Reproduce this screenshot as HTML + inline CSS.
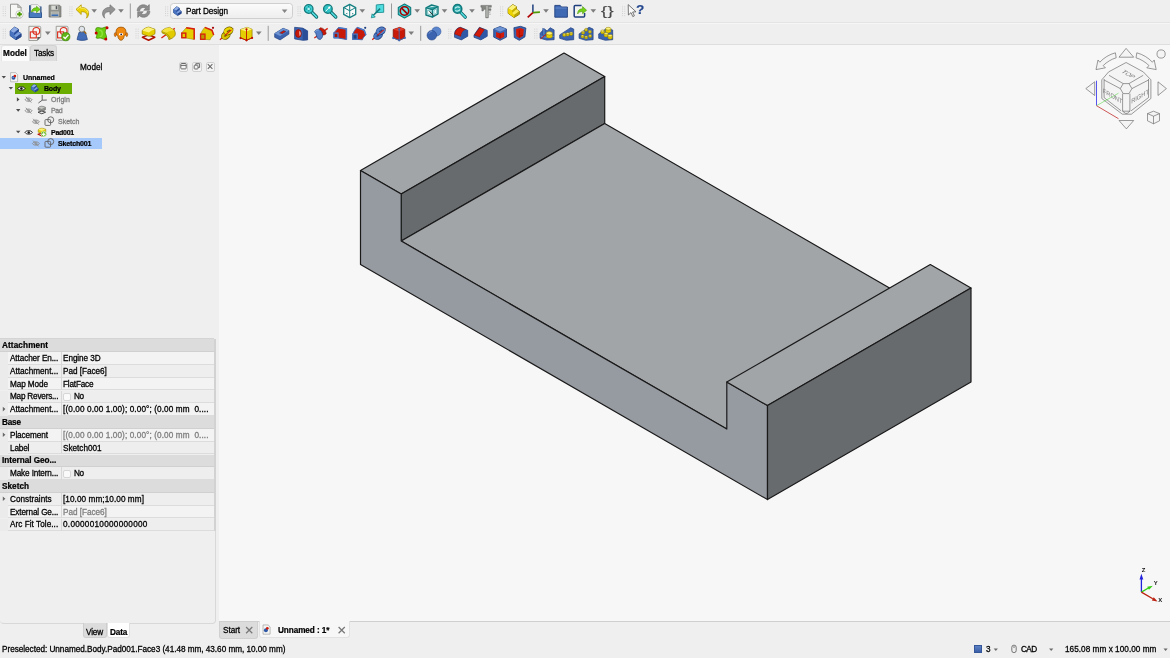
<!DOCTYPE html>
<html><head><meta charset="utf-8"><title>FreeCAD</title>
<style>
*{box-sizing:border-box;margin:0;padding:0}
html,body{width:1170px;height:658px;overflow:hidden;background:#efefef;font-family:"Liberation Sans",sans-serif;font-size:9px;color:#000}
.abs{position:absolute}
#app{position:relative;width:1170px;height:658px;background:#efefef;overflow:hidden}
.t{position:absolute;white-space:nowrap;line-height:11px;height:11px;will-change:transform;-webkit-text-stroke:.28px currentColor}
.t.b{-webkit-text-stroke:.22px currentColor}
.b{font-weight:bold}
.g{color:#8a8a8a}
#view{position:absolute;left:219px;top:45px;width:951px;height:576px;background:#f7f7f7}
.hline{position:absolute;height:1px;background:#d8d8d8}
svg{position:absolute;overflow:visible}
</style></head><body><div id="app">
<!-- TOOLBARS -->
<div class="hline" style="left:0;top:22px;width:1170px;background:#e4e4e4"></div><div class="hline" style="left:0;top:23px;width:1170px;background:#f6f6f6"></div>
<div class="hline" style="left:0;top:44px;width:1170px;background:#dedede"></div>
<!--TB1-->
<div class="abs" style="left:170px;top:3px;width:122.5px;height:15.6px;background:linear-gradient(#fbfbfb,#eeeeee);border:1px solid #cfcfcf;border-radius:3.5px"></div><svg style="left:0;top:0" width="700" height="45" viewBox="0 0 700 45">
<rect x="2.7" y="6.4" width="1" height="1" fill="#d2d2d2"/><rect x="4.9" y="6.4" width="1" height="1" fill="#d2d2d2"/><rect x="2.7" y="8.6" width="1" height="1" fill="#d2d2d2"/><rect x="4.9" y="8.6" width="1" height="1" fill="#d2d2d2"/><rect x="2.7" y="10.8" width="1" height="1" fill="#d2d2d2"/><rect x="4.9" y="10.8" width="1" height="1" fill="#d2d2d2"/><rect x="2.7" y="13.0" width="1" height="1" fill="#d2d2d2"/><rect x="4.9" y="13.0" width="1" height="1" fill="#d2d2d2"/><rect x="2.7" y="15.2" width="1" height="1" fill="#d2d2d2"/><rect x="4.9" y="15.2" width="1" height="1" fill="#d2d2d2"/>
<g transform="translate(7.9 3.0) scale(1.000)"><path d="M2.600 1.200h7.200l3.400 3.400v10.200H2.600z" fill="#f7f7f5" stroke="#8b8d88" stroke-width=".9"/><path d="M9.800 1.200v3.400h3.400z" fill="#c6c8c3" stroke="#8b8d88" stroke-width=".6"/>
<circle cx="11.600" cy="11.200" r="3.700" fill="#fdfdfd" stroke="#b5b7b2" stroke-width=".7"/><path d="M11.600 8.800v4.800M9.200 11.200h4.800" stroke="#4e9a06" stroke-width="1.900"/></g>
<g transform="translate(27.3 3.0) scale(1.000)"><path d="M1.8 2.2h5l1 1.3h6.4v11H1.8z" fill="#204a87"/><path d="M3.6 1.6h6.8l2.4 2.4v6H3.6z" fill="#f4f4f2" stroke="#999" stroke-width=".5"/>
<path d="M2.2 9.6c2-1.2 4-.2 5.6.4 2 .7 4 .6 6-.4v4.6H2.2z" fill="#4a7bc0"/><path d="M1.8 9.4v5.1h12.4V9.4" fill="none" stroke="#204a87" stroke-width=".8"/>
<path d="M4.2 9.2c.2-3 2.2-4.6 5-4.4V3.2l3.6 3.2-3.6 3.2V7.8c-1.8-.3-3.2.1-5 1.4z" fill="#73d216" stroke="#4e9a06" stroke-width=".6"/></g>
<g transform="translate(46.9 3.0) scale(1.000)"><path d="M2.2 2.2h10.4l1.4 1.4v10.4H2.2z" fill="#8f918c" stroke="#6d6f6a" stroke-width=".8"/><rect x="4.4" y="2.6" width="6.8" height="4.2" fill="#d7d9d4"/><rect x="8.8" y="3.1" width="1.6" height="3.1" fill="#55575a"/>
<rect x="4" y="8.6" width="8" height="5" fill="#c3c5c0"/><rect x="4.6" y="11.4" width="6.8" height="1.7" fill="#3c6eb4"/><path d="M4.6 9.6h6.8M4.6 10.5h6.8" stroke="#9a9c97" stroke-width=".5"/></g>
<rect x="69.3" y="6.4" width="1" height="1" fill="#d2d2d2"/><rect x="71.5" y="6.4" width="1" height="1" fill="#d2d2d2"/><rect x="69.3" y="8.6" width="1" height="1" fill="#d2d2d2"/><rect x="71.5" y="8.6" width="1" height="1" fill="#d2d2d2"/><rect x="69.3" y="10.8" width="1" height="1" fill="#d2d2d2"/><rect x="71.5" y="10.8" width="1" height="1" fill="#d2d2d2"/><rect x="69.3" y="13.0" width="1" height="1" fill="#d2d2d2"/><rect x="71.5" y="13.0" width="1" height="1" fill="#d2d2d2"/><rect x="69.3" y="15.2" width="1" height="1" fill="#d2d2d2"/><rect x="71.5" y="15.2" width="1" height="1" fill="#d2d2d2"/>
<g transform="translate(74.6 3.0) scale(1.000)"><path d="M1.4 6.4l5.2-4.6v2.7c4.6-.2 7.6 2.6 7.4 6.4-.1 1.9-1.1 3.3-2.2 4.3.7-1.5.9-2.9.3-4.1-1-2-3-2.6-5.5-2.4v2.8z" fill="#edd400" stroke="#b39800" stroke-width=".8" stroke-linejoin="round"/>
<path d="M2.6 6.4l3.4-3v1.7c4-.3 6.8 1.8 7.2 4.6" fill="none" stroke="#fcf08a" stroke-width=".8"/></g>
<path d="M91.4 9.3 h5.6 l-2.8 3.4z" fill="#7d7d7d"/>
<g transform="translate(100.6 3.0) scale(1.000)"><path d="M14.6 6.4L9.4 1.8v2.7C4.8 4.3 1.8 7.1 2 10.9c.1 1.9 1.1 3.3 2.2 4.3-.7-1.5-.9-2.9-.3-4.1 1-2 3-2.6 5.5-2.4v2.8z" fill="#939393" stroke="#7a7a7a" stroke-width=".8" stroke-linejoin="round"/></g>
<path d="M118.2 9.3 h5.6 l-2.8 3.4z" fill="#7d7d7d"/>
<rect x="129.8" y="3.5" width="1" height="15" fill="#9a9a9a"/>
<g transform="translate(135.5 3.0) scale(1.000)"><path d="M1.600 7.800C1.800 4.200 4.400 1.800 7.800 1.800c1.700 0 3 .5 4.100 1.500l1.900-1.700v5.600H8.200l1.900-1.800c-.7-.6-1.500-.9-2.400-.9-1.900 0-3.200 1.300-3.500 3.300z" fill="#8d8d8d" stroke="#6f6f6f" stroke-width=".6"/>
<path d="M14.400 8.200c-.2 3.600-2.800 6-6.200 6-1.700 0-3-.5-4.100-1.500L2.200 14.400V8.800h5.600L5.900 10.600c.7.600 1.500.9 2.400.9 1.900 0 3.200-1.300 3.500-3.300z" fill="#8d8d8d" stroke="#6f6f6f" stroke-width=".6"/></g>
<rect x="165.0" y="6.4" width="1" height="1" fill="#d2d2d2"/><rect x="167.2" y="6.4" width="1" height="1" fill="#d2d2d2"/><rect x="165.0" y="8.6" width="1" height="1" fill="#d2d2d2"/><rect x="167.2" y="8.6" width="1" height="1" fill="#d2d2d2"/><rect x="165.0" y="10.8" width="1" height="1" fill="#d2d2d2"/><rect x="167.2" y="10.8" width="1" height="1" fill="#d2d2d2"/><rect x="165.0" y="13.0" width="1" height="1" fill="#d2d2d2"/><rect x="167.2" y="13.0" width="1" height="1" fill="#d2d2d2"/><rect x="165.0" y="15.2" width="1" height="1" fill="#d2d2d2"/><rect x="167.2" y="15.2" width="1" height="1" fill="#d2d2d2"/>
<g transform="translate(170.3 4.4) scale(0.860)"><g transform="translate(1.5 1.2) scale(.82)"><path d="M2.800 5.500L7.200 1.700L11 3.800V6.400L13.700 8.200V11.300L8.600 14.400L2.800 10.300z" fill="#3b63b0" stroke="#1f3f7e" stroke-width=".9" stroke-linejoin="round"/>
<path d="M2.800 5.500L7.200 1.700L11 3.800L6.600 7.500z" fill="#8fade3"/><path d="M6.600 7.500L11 3.800V6.400L6.600 10.100z" fill="#2c4f9c"/><path d="M6.600 10.100L11 6.400L13.700 8.200L8.600 11.900z" fill="#7d9fdc"/><path d="M8.600 11.900L13.700 8.200V11.300L8.600 14.400z" fill="#27478f"/><path d="M2.800 5.500L6.600 7.500V10.100L8.600 11.900V14.400L2.800 10.300z" fill="#4a74c0"/></g></g>
<path d="M281.8 9.6 h5.6 l-2.8 3.4z" fill="#858585"/>
<rect x="297.5" y="6.4" width="1" height="1" fill="#d2d2d2"/><rect x="299.7" y="6.4" width="1" height="1" fill="#d2d2d2"/><rect x="297.5" y="8.6" width="1" height="1" fill="#d2d2d2"/><rect x="299.7" y="8.6" width="1" height="1" fill="#d2d2d2"/><rect x="297.5" y="10.8" width="1" height="1" fill="#d2d2d2"/><rect x="299.7" y="10.8" width="1" height="1" fill="#d2d2d2"/><rect x="297.5" y="13.0" width="1" height="1" fill="#d2d2d2"/><rect x="299.7" y="13.0" width="1" height="1" fill="#d2d2d2"/><rect x="297.5" y="15.2" width="1" height="1" fill="#d2d2d2"/><rect x="299.7" y="15.2" width="1" height="1" fill="#d2d2d2"/>
<g transform="translate(302.8 3.0) scale(1.000)"><path d="M8.800 9l5 5" stroke="#0d6466" stroke-width="3.300" stroke-linecap="round"/><path d="M8.800 9l5 5" stroke="#55dfe1" stroke-width="1.700" stroke-linecap="round"/>
<circle cx="5.9" cy="6" r="4.3" fill="#3ccfd1" stroke="#11797b" stroke-width="1.3"/><path d="M5.9 2.9v6.2M2.8 6h6.2" stroke="#0f8385" stroke-width="1" stroke-dasharray="1.6 2.2"/><circle cx="5.9" cy="6" r="1.2" fill="#b5f2f3"/></g>
<g transform="translate(322.0 3.0) scale(1.000)"><path d="M8.800 9l5 5" stroke="#0d6466" stroke-width="3.300" stroke-linecap="round"/><path d="M8.800 9l5 5" stroke="#55dfe1" stroke-width="1.700" stroke-linecap="round"/>
<circle cx="5.9" cy="6" r="4.3" fill="#2fc3c5" stroke="#11797b" stroke-width="1.3"/><path d="M3.6 8.4l4-4.2" stroke="#e6f7f7" stroke-width="1"/><path d="M8.6 3.2L5.8 4l2 2z" fill="#fff"/></g>
<g transform="translate(341.7 3.0) scale(1.000)"><path d="M8 1.4l6 3.2v6.8l-6 3.2-6-3.2V4.6z" fill="#fbfbfb" stroke="#157f81" stroke-width="1.3" stroke-linejoin="round"/><path d="M2 4.6l6 3.2 6-3.2M8 7.8v6.8M8 1.4v6.4" stroke="#157f81" stroke-width="1" fill="none"/>
<path d="M4 10.4l1.6-.6v1.4zM10.4 10l1.6.6-1.6.8z" fill="#157f81"/></g>
<path d="M359.5 9.3 h5.6 l-2.8 3.4z" fill="#7d7d7d"/>
<g transform="translate(369.5 3.0) scale(1.000)"><path d="M6.8 1.9l7.4-.6v8l-7.6.3z" fill="#4fdcde" stroke="#1b8f91" stroke-width=".9" stroke-linejoin="round"/><path d="M10.6 5.6L3.4 12.8" stroke="#11797b" stroke-width="1.5"/><path d="M1.8 14.8l.8-4 3.2 3.2z" fill="#4fdcde" stroke="#11797b" stroke-width=".7"/></g>
<rect x="391.0" y="3.5" width="1" height="15" fill="#9a9a9a"/>
<g transform="translate(396.5 3.0) scale(1.000)"><path d="M8 1l6.2 3.5v7L8 15l-6.200-3.500v-7z" fill="#3bd3d5" stroke="#11797b" stroke-width="1.1" stroke-linejoin="round"/><circle cx="8" cy="8" r="4.2" fill="#6ee9eb" stroke="#a40000" stroke-width="1.6"/><path d="M5.1 5.1l5.8 5.8" stroke="#a40000" stroke-width="1.7"/></g>
<path d="M414.4 9.3 h5.6 l-2.8 3.4z" fill="#7d7d7d"/>
<g transform="translate(424.0 3.0) scale(1.000)"><path d="M2 4.800l5.600-2.800 6.400 1.600v7.200l-5.600 3.400-6.400-2.200z" fill="#c9eeee" stroke="#11797b" stroke-width="1.400" stroke-linejoin="round"/><path d="M2 4.800l6.400 2 5.600-3.400z" fill="#2a9c9e"/><path d="M2 4.800l6.400 2 5.600-3.400M8.400 6.800v7.400" fill="none" stroke="#11797b" stroke-width="1.200"/><path d="M3.600 7.200l3.400 1v3.800l-3.400-1.200z" fill="#f4fbfb" stroke="#2a9a9c" stroke-width=".5"/><path d="M10 7.400l2.600-1.600v4.200l-2.600 1.600z" fill="#f4fbfb" stroke="#2a9a9c" stroke-width=".5"/><path d="M5.400 8.400l4.400 4.200" stroke="#333" stroke-width="1"/></g>
<path d="M441.7 9.3 h5.6 l-2.8 3.4z" fill="#7d7d7d"/>
<g transform="translate(451.3 3.0) scale(1.000)"><path d="M9 9l5 5.200" stroke="#0d6466" stroke-width="3.200" stroke-linecap="round"/><path d="M9 9l5 5.200" stroke="#55dfe1" stroke-width="1.600" stroke-linecap="round"/>
<circle cx="6.200" cy="5.900" r="4.300" fill="#2aa9ab" stroke="#11797b" stroke-width="1.500"/><path d="M3.800 5.400c.8-1.600 3.200-2 4.600-.8M8.600 6.600c-.8 1.600-3.200 2-4.600.8" stroke="#c9f3f3" stroke-width="1.100" fill="none"/></g>
<path d="M469.2 9.3 h5.6 l-2.8 3.4z" fill="#7d7d7d"/>
<g transform="translate(478.5 3.0) scale(1.000)"><path d="M2.4 2.400h10.400v1.800H9.800v1.600h2.600v1.500H9.800v7.500H7.200V6.200H5.600l-1 1.800H3.400V4.200h-1z" fill="#858783" stroke="#5f615d" stroke-width=".5"/><path d="M10.400 8h2M10.400 9.600h1.400M10.400 11.200h2" stroke="#8b8d89" stroke-width=".6"/><rect x="7.800" y="3" width="1.400" height="11" fill="#bcbeba"/></g>
<rect x="500.0" y="6.4" width="1" height="1" fill="#d2d2d2"/><rect x="502.2" y="6.4" width="1" height="1" fill="#d2d2d2"/><rect x="500.0" y="8.6" width="1" height="1" fill="#d2d2d2"/><rect x="502.2" y="8.6" width="1" height="1" fill="#d2d2d2"/><rect x="500.0" y="10.8" width="1" height="1" fill="#d2d2d2"/><rect x="502.2" y="10.8" width="1" height="1" fill="#d2d2d2"/><rect x="500.0" y="13.0" width="1" height="1" fill="#d2d2d2"/><rect x="502.2" y="13.0" width="1" height="1" fill="#d2d2d2"/><rect x="500.0" y="15.2" width="1" height="1" fill="#d2d2d2"/><rect x="502.2" y="15.2" width="1" height="1" fill="#d2d2d2"/>
<g transform="translate(505.5 3.0) scale(1.000)"><g transform="translate(-.2 -.2) scale(1.02)"><path d="M2.800 5.500L7.200 1.700L11 3.800V6.400L13.700 8.200V11.300L8.600 14.400L2.800 10.300z" fill="#e2cb00" stroke="#7a6800" stroke-width=".9" stroke-linejoin="round"/>
<path d="M2.800 5.500L7.200 1.700L11 3.800L6.600 7.500z" fill="#fcf27a"/><path d="M6.600 7.500L11 3.800V6.400L6.600 10.100z" fill="#c4ae00"/><path d="M6.600 10.100L11 6.400L13.700 8.200L8.600 11.900z" fill="#f7ea55"/><path d="M8.600 11.900L13.700 8.200V11.300L8.600 14.400z" fill="#b8a200"/><path d="M2.800 5.500L6.600 7.500V10.100L8.600 11.900V14.400L2.800 10.300z" fill="#edd400"/></g></g>
<g transform="translate(525.5 3.0) scale(1.000)"><path d="M7.400 1.600v8" stroke="#1f3f7e" stroke-width="1.500"/><path d="M7.400 9.600l7-.4" stroke="#4e9a06" stroke-width="1.700"/><path d="M7.400 9.600l-5.200 4.800" stroke="#b00000" stroke-width="1.700"/></g>
<path d="M543.2 9.3 h5.6 l-2.8 3.4z" fill="#7d7d7d"/>
<g transform="translate(553.0 3.0) scale(1.000)"><path d="M1.800 2.400h5.400l1.200 1.600h6v10.200H1.800z" fill="#3f69b3" stroke="#1f3f7e" stroke-width=".9" stroke-linejoin="round"/><path d="M2.400 5h11.400" stroke="#6e93d2" stroke-width=".8"/></g>
<g transform="translate(572.0 3.0) scale(1.000)"><path d="M9.600 2.400H3.200c-.6 0-1 .4-1 1v9.600c0 .6.400 1 1 1h8.400c.6 0 1-.4 1-1V10" fill="#f3f3f1" stroke="#1f3f7e" stroke-width="1.500"/><path d="M5.600 11c0-3.400 1.800-5.200 5-5.200V3.600l4 3.600-4 3.600V8.600c-2.200-.2-3.800.6-5 2.400z" fill="#73d216" stroke="#4e9a06" stroke-width=".6"/></g>
<path d="M590.5 9.3 h5.6 l-2.8 3.4z" fill="#7d7d7d"/>
<rect x="622.0" y="6.4" width="1" height="1" fill="#d2d2d2"/><rect x="624.2" y="6.4" width="1" height="1" fill="#d2d2d2"/><rect x="622.0" y="8.6" width="1" height="1" fill="#d2d2d2"/><rect x="624.2" y="8.6" width="1" height="1" fill="#d2d2d2"/><rect x="622.0" y="10.8" width="1" height="1" fill="#d2d2d2"/><rect x="624.2" y="10.8" width="1" height="1" fill="#d2d2d2"/><rect x="622.0" y="13.0" width="1" height="1" fill="#d2d2d2"/><rect x="624.2" y="13.0" width="1" height="1" fill="#d2d2d2"/><rect x="622.0" y="15.2" width="1" height="1" fill="#d2d2d2"/><rect x="624.2" y="15.2" width="1" height="1" fill="#d2d2d2"/>
<g transform="translate(626.0 3.0) scale(1.000)"><path d="M2.200 1.600l.2 10.400 2.600-2.400 1.800 4 1.600-.8-1.800-3.800 3.400-.2z" fill="#fafafa" stroke="#555" stroke-width=".8" stroke-linejoin="round"/></g>
<rect x="2.7" y="28.7" width="1" height="1" fill="#d2d2d2"/><rect x="4.9" y="28.7" width="1" height="1" fill="#d2d2d2"/><rect x="2.7" y="30.9" width="1" height="1" fill="#d2d2d2"/><rect x="4.9" y="30.9" width="1" height="1" fill="#d2d2d2"/><rect x="2.7" y="33.1" width="1" height="1" fill="#d2d2d2"/><rect x="4.9" y="33.1" width="1" height="1" fill="#d2d2d2"/><rect x="2.7" y="35.3" width="1" height="1" fill="#d2d2d2"/><rect x="4.9" y="35.3" width="1" height="1" fill="#d2d2d2"/><rect x="2.7" y="37.5" width="1" height="1" fill="#d2d2d2"/><rect x="4.9" y="37.5" width="1" height="1" fill="#d2d2d2"/>
<g transform="translate(7.4 25.4) scale(1.000)"><path d="M2.800 5.500L7.200 1.700L11 3.800V6.400L13.700 8.200V11.300L8.600 14.400L2.800 10.300z" fill="#3b63b0" stroke="#1f3f7e" stroke-width=".9" stroke-linejoin="round"/>
<path d="M2.800 5.500L7.200 1.700L11 3.800L6.600 7.500z" fill="#8fade3"/><path d="M6.600 7.500L11 3.800V6.400L6.600 10.100z" fill="#2c4f9c"/><path d="M6.600 10.100L11 6.400L13.700 8.200L8.600 11.900z" fill="#7d9fdc"/><path d="M8.600 11.900L13.700 8.200V11.300L8.600 14.400z" fill="#27478f"/><path d="M2.800 5.500L6.600 7.500V10.100L8.600 11.900V14.400L2.800 10.300z" fill="#4a74c0"/></g>
<g transform="translate(27.3 25.3) scale(1.000)"><path d="M1.600 1h10.600c.8 0 1.200.4 1.200 1.200v9.600L10 15.200H1.600z" fill="#f2f2f0" stroke="#8b8d88" stroke-width=".8"/><path d="M13.400 11.800L10 15.200v-3.400z" fill="#5a5c58"/><rect x="3" y="6.600" width="6" height="6" fill="none" stroke="#dc2a1a" stroke-width="1.100"/><circle cx="9" cy="5.600" r="3.400" fill="none" stroke="#dc2a1a" stroke-width="1.100"/></g>
<path d="M45.0 31.6 h5.6 l-2.8 3.4z" fill="#7d7d7d"/>
<g transform="translate(54.6 25.3) scale(1.000)"><path d="M1.600 1h10.600c.8 0 1.200.4 1.200 1.200v12.800H1.600z" fill="#f2f2f0" stroke="#8b8d88" stroke-width=".8"/><rect x="3" y="6.600" width="6" height="6" fill="none" stroke="#dc2a1a" stroke-width="1.100"/><circle cx="9" cy="5.600" r="3.400" fill="none" stroke="#dc2a1a" stroke-width="1.100"/>
<circle cx="11.200" cy="11.400" r="4.100" fill="#5fb518" stroke="#3f8a05" stroke-width=".7"/><path d="M8.800 11.400l1.800 1.800 3.200-3.600" fill="none" stroke="#fff" stroke-width="1.300"/></g>
<g transform="translate(74.2 24.9) scale(1.000)"><path d="M4.800 7.400h6.400l2 7.200c-3.400 1.200-7 1.200-10.400 0z" fill="#446db7" stroke="#1f3f7e" stroke-width=".7"/><circle cx="7.600" cy="4.200" r="2.900" fill="#dfe3ea" stroke="#8b8d88" stroke-width="1"/><path d="M9.800 6.400l2.200 2.400" stroke="#9a6a1c" stroke-width="1.500"/></g>
<g transform="translate(93.8 25.3) scale(1.000)"><path d="M2.200 3c1.600-1.400 3.400-.6 4.800-.2 2 .6 3.600-1.600 6.400-1-.8 2-2.200 3.200-2 5.200.2 2.200 2 3.600 1.200 6.800-2.600 1-3.800-.8-5.600-1-1.800-.2-3 .800-4.800-.4.800-1.800 1-3 .6-4.600C2.400 6.200 1.400 5 2.200 3z" fill="#6ccc10" stroke="#3f8a05" stroke-width=".8"/><path d="M6 5c1.500 0 2.500 1.500 2.500 3.500S7.500 11.500 6.500 11" fill="none" stroke="#8ee238" stroke-width="1.400" stroke-linecap="round"/><circle cx="13.200" cy="2.400" r="1.500" fill="#c80000"/><circle cx="2.400" cy="7.800" r="1.500" fill="#c80000"/><circle cx="12" cy="13.800" r="1.500" fill="#c80000"/></g>
<g transform="translate(113.0 25.3) scale(1.000)"><path d="M2 7.200c-1 1.200-1 3.200.2 4.200.8-.6 1.200-1.600 1.400-2.800zM14 7.200c1 1.200 1 3.200-.2 4.200-.8-.6-1.200-1.600-1.400-2.800z" fill="#f57900" stroke="#8f4a00" stroke-width=".6"/><path d="M8 1.800c3.200 0 5 2 5 4.800 0 2-.8 3.200-1.800 4.400-.4 2.200-1.600 4-3.200 4s-2.800-1.800-3.200-4C3.800 9.800 3 8.600 3 6.600c0-2.800 1.800-4.800 5-4.800z" fill="#f08a10" stroke="#8f4a00" stroke-width=".7"/><ellipse cx="8" cy="9" rx="2.200" ry="1.300" fill="#fff"/><circle cx="8.200" cy="9" r=".9" fill="#1a1a3a"/></g>
<rect x="135.5" y="28.7" width="1" height="1" fill="#d2d2d2"/><rect x="137.7" y="28.7" width="1" height="1" fill="#d2d2d2"/><rect x="135.5" y="30.9" width="1" height="1" fill="#d2d2d2"/><rect x="137.7" y="30.9" width="1" height="1" fill="#d2d2d2"/><rect x="135.5" y="33.1" width="1" height="1" fill="#d2d2d2"/><rect x="137.7" y="33.1" width="1" height="1" fill="#d2d2d2"/><rect x="135.5" y="35.3" width="1" height="1" fill="#d2d2d2"/><rect x="137.7" y="35.3" width="1" height="1" fill="#d2d2d2"/><rect x="135.5" y="37.5" width="1" height="1" fill="#d2d2d2"/><rect x="137.7" y="37.5" width="1" height="1" fill="#d2d2d2"/>
<g transform="translate(140.6 25.3) scale(1.000)"><path d="M1.800 12l6.200-2.400 6.200 2.400L8 15z" fill="none" stroke="#b01000" stroke-width="1.500" stroke-linejoin="round"/><path d="M1.600 5.200c2-2 4.400-3.200 6.600-3.400l6.200 2.200v4.400c-2 1.600-4 2.400-6.200 2.600L1.600 8.800z" fill="#e6cf00" stroke="#8f7a00" stroke-width=".7" stroke-linejoin="round"/><path d="M1.800 5.200c2-2 4.200-3 6.400-3.200l6 2.200c-2 .4-4.200 1.400-6 3z" fill="#fcf27a"/></g>
<g transform="translate(159.9 25.3) scale(1.000)"><path d="M1.500 12.700L14.900 3.100" stroke="#d81e0e" stroke-width="1.300"/><path d="M1.900 5.500Q5 2.500 9.700 2.100L14.500 4.900Q16 7.500 15.200 10.300Q12.500 13.500 9 14.400Q8.500 9.500 2.200 7.600z" fill="#e2cb00" stroke="#8f7a00" stroke-width=".7" stroke-linejoin="round"/><path d="M2 5.600Q5 2.700 9.700 2.300L14.300 5Q9 5.300 5.200 8z" fill="#f3e23c"/><path d="M2.600 6.600Q8.600 8 10.400 13.600" fill="none" stroke="#8f7a00" stroke-width=".6"/></g>
<g transform="translate(179.8 25.3) scale(1.000)"><path d="M2 7.400l4.400-5 8 1.200v10.600L5.800 12.600H2z" fill="#e6cf00" stroke="#8f7a00" stroke-width=".5"/><path d="M6.400 2.400l8 1.200v10.600" fill="none" stroke="#d81e0e" stroke-width="1.500"/><rect x="2" y="7.800" width="4" height="4.600" fill="none" stroke="#d81e0e" stroke-width="1.400"/></g>
<g transform="translate(199.4 25.3) scale(1.000)"><path d="M1 9C2.600 5.600 3.800 3.600 5.400 2.100l7.200 2.800 1.700 4.700c-2 1.600-3 3.200-3.600 4.900L5.800 14.100H1z" fill="#e2cb00" stroke="#8f7a00" stroke-width=".5"/><path d="M5.400 2.100l7.200 2.800 1.700 4.700" fill="none" stroke="#d81e0e" stroke-width="1.500" stroke-linejoin="round"/><rect x="1.200" y="8.800" width="4.400" height="5.200" fill="#b89a00" stroke="#d81e0e" stroke-width="1.300"/><circle cx="13.600" cy="2.500" r="1.100" fill="#a40000"/></g>
<g transform="translate(218.8 25.3) scale(1.000)"><path d="M1.100 14.400L14.400 3.100" stroke="#d81e0e" stroke-width="1.200"/><ellipse cx="7" cy="10.200" rx="3.100" ry="2" transform="rotate(-30 7 10.200)" fill="none" stroke="#6f5f00" stroke-width="3.800"/><ellipse cx="7" cy="10.200" rx="3.100" ry="2" transform="rotate(-30 7 10.200)" fill="none" stroke="#d9c300" stroke-width="2.500"/>
<ellipse cx="9.600" cy="5.600" rx="3.300" ry="2.100" transform="rotate(-30 9.600 5.600)" fill="none" stroke="#6f5f00" stroke-width="3.900"/><ellipse cx="9.600" cy="5.600" rx="3.300" ry="2.100" transform="rotate(-30 9.600 5.600)" fill="none" stroke="#ecd500" stroke-width="2.600"/><path d="M6.200 10L12.600 4.600" stroke="#d81e0e" stroke-width="1.100"/></g>
<g transform="translate(238.1 25.3) scale(1.000)"><path d="M2.400 4.200L9 2l5 2v8.600L8.400 15l-6-2.400z" fill="#e6cf00" stroke="#8f7a00" stroke-width=".7" stroke-linejoin="round"/><path d="M2.400 4.200L9 2l5 2-5.600 2.200z" fill="#fcf27a"/><path d="M8.400 3.600V15M2.400 12.600l6 2.400 5.600-2.400" fill="none" stroke="#c01000" stroke-width=".9"/><circle cx="8.400" cy="4" r="1.100" fill="#c01000"/><circle cx="2.400" cy="12.800" r="1.100" fill="#c01000"/><circle cx="8.400" cy="15" r="1.100" fill="#c01000"/><circle cx="14" cy="12.600" r="1.100" fill="#c01000"/></g>
<path d="M256.0 31.6 h5.6 l-2.8 3.4z" fill="#7d7d7d"/>
<rect x="267.7" y="25.8" width="1" height="15" fill="#9a9a9a"/>
<g transform="translate(273.7 25.3) scale(1.000)"><path d="M1 8.200L9.400 3l5.800 2.200v3.600L6.400 14.600 1 12z" fill="#3b63b0" stroke="#1f3f7e" stroke-width=".7" stroke-linejoin="round"/><path d="M1 8.200L9.400 3l5.800 2.200-8.800 5.400z" fill="#6e93d2"/><path d="M5.800 7.600l4-2.400 2.600 1-4 2.400z" fill="#c81808" stroke="#1f3f7e" stroke-width=".5"/></g>
<g transform="translate(293.0 25.3) scale(1.000)"><path d="M1.600 2l8 .8 5 2.800v9l-5 .4-8-1.400z" fill="#3b63b0" stroke="#1f3f7e" stroke-width=".7" stroke-linejoin="round"/><path d="M9.600 2.800l5 2.800v9l-5 .400z" fill="#2a4f98"/><ellipse cx="5.400" cy="8.200" rx="2.900" ry="4" fill="#c81808" stroke="#8a0a00" stroke-width=".6"/><path d="M6.600 5.400c1.200.8 1.400 4 .2 5.600-.4-1.600-.6-3.800-.2-5.600z" fill="#e8e8e8"/></g>
<g transform="translate(312.8 25.3) scale(1.000)"><path d="M1.500 12.700L14.900 3.100" stroke="#d81e0e" stroke-width="1.300"/><path d="M7.600 2.400c3.200.4 5.400 2.800 5.800 6-1 1-2.200 1.400-3.600 1.200C9.600 7 8.400 5 6 4z" fill="#c81808" stroke="#7a0a00" stroke-width=".6"/><path d="M1.800 6.400C2.800 4.800 4.200 4 6 4c2.400 1 3.600 3 3.800 5.600.2 2-.8 3.600-2.400 4.600C5.200 14 4 12.600 3.800 10.600 3.600 9 2.800 7.600 1.800 6.400z" fill="#5580c8" stroke="#1f3f7e" stroke-width=".7"/><path d="M2.400 6.400C3.200 5.200 4.400 4.600 6 4.600" fill="none" stroke="#9ab6e6" stroke-width=".8"/></g>
<g transform="translate(332.0 25.3) scale(1.000)"><path d="M2 7.400l4.400-5 8 1.200v10.600L5.800 12.600H2z" fill="#c81808" stroke="#3f69b3" stroke-width="1"/><path d="M6.400 2.400l8 1.200v10.600" fill="none" stroke="#4a76c2" stroke-width="1.500"/><rect x="2" y="7.800" width="4" height="4.600" fill="#a81000" stroke="#4a76c2" stroke-width="1.400"/></g>
<g transform="translate(351.6 25.3) scale(1.000)"><path d="M1 9C2.600 5.600 3.800 3.600 5.400 2.100l7.200 2.800 1.700 4.700c-2 1.600-3 3.200-3.600 4.900L5.800 14.100H1z" fill="#c81808" stroke="#3f69b3" stroke-width=".9"/><path d="M5.400 2.100l7.200 2.800 1.700 4.700" fill="none" stroke="#4a76c2" stroke-width="1.500" stroke-linejoin="round"/><rect x="1.200" y="8.800" width="4.400" height="5.200" fill="#1f3f7e" stroke="#4a76c2" stroke-width="1.300"/><circle cx="13.600" cy="2.500" r="1.100" fill="#1f3f7e"/></g>
<g transform="translate(371.1 25.3) scale(1.000)"><path d="M1.100 14.400L14.400 3.100" stroke="#d81e0e" stroke-width="1.200"/><ellipse cx="7" cy="10.200" rx="3.100" ry="2" transform="rotate(-30 7 10.200)" fill="none" stroke="#1f3f7e" stroke-width="3.800"/><ellipse cx="7" cy="10.200" rx="3.100" ry="2" transform="rotate(-30 7 10.200)" fill="none" stroke="#4a76c2" stroke-width="2.500"/>
<ellipse cx="9.600" cy="5.600" rx="3.300" ry="2.100" transform="rotate(-30 9.600 5.600)" fill="none" stroke="#1f3f7e" stroke-width="3.900"/><ellipse cx="9.600" cy="5.600" rx="3.300" ry="2.100" transform="rotate(-30 9.600 5.600)" fill="none" stroke="#5580c8" stroke-width="2.600"/><path d="M6.200 10L12.600 4.600" stroke="#d81e0e" stroke-width="1.100"/></g>
<g transform="translate(390.8 25.3) scale(1.000)"><path d="M2.400 4.200L9 2l5 2v8.600L8.400 15l-6-2.400z" fill="#c81808" stroke="#7a0a00" stroke-width=".7" stroke-linejoin="round"/><path d="M2.400 4.200L9 2l5 2-5.600 2.200z" fill="#e03a28"/><path d="M8.400 3.600V15M2.400 12.600l6 2.400 5.600-2.400" fill="none" stroke="#3f69b3" stroke-width=".9"/><circle cx="8.400" cy="4" r="1.100" fill="#3f69b3"/><circle cx="2.400" cy="12.800" r="1.100" fill="#3f69b3"/><circle cx="8.400" cy="15" r="1.100" fill="#3f69b3"/><circle cx="14" cy="12.600" r="1.100" fill="#3f69b3"/></g>
<path d="M408.4 31.6 h5.6 l-2.8 3.4z" fill="#7d7d7d"/>
<rect x="420.2" y="25.8" width="1" height="15" fill="#9a9a9a"/>
<g transform="translate(426.0 25.3) scale(1.000)"><circle cx="10.400" cy="6.200" r="4.600" fill="#5a84cc" stroke="#2a4f98" stroke-width=".5"/><circle cx="5.800" cy="10" r="4.800" fill="#3b63b0" stroke="#1f3f7e" stroke-width=".5"/><path d="M3 8.200c.6-1.400 1.800-2.200 3.200-2.200" stroke="#7a9bd6" stroke-width=".9" fill="none"/></g>
<rect x="448.2" y="28.7" width="1" height="1" fill="#d2d2d2"/><rect x="450.4" y="28.7" width="1" height="1" fill="#d2d2d2"/><rect x="448.2" y="30.9" width="1" height="1" fill="#d2d2d2"/><rect x="450.4" y="30.9" width="1" height="1" fill="#d2d2d2"/><rect x="448.2" y="33.1" width="1" height="1" fill="#d2d2d2"/><rect x="450.4" y="33.1" width="1" height="1" fill="#d2d2d2"/><rect x="448.2" y="35.3" width="1" height="1" fill="#d2d2d2"/><rect x="450.4" y="35.3" width="1" height="1" fill="#d2d2d2"/><rect x="448.2" y="37.5" width="1" height="1" fill="#d2d2d2"/><rect x="450.4" y="37.5" width="1" height="1" fill="#d2d2d2"/>
<g transform="translate(453.3 25.3) scale(1.000)"><path d="M1.200 8.400C1.600 5 3.600 2.600 7 2l7.400 3v6L8 14.600 1.200 12z" fill="#3b63b0" stroke="#1f3f7e" stroke-width=".7" stroke-linejoin="round"/><path d="M1.400 8.800C1.800 5.200 3.800 2.800 7 2.200l5.400 2.200c-2.800.8-4.600 3-4.800 6.600z" fill="#d01a0a" stroke="#8a0a00" stroke-width=".5"/><path d="M12.400 4.400l2 .8v5.600L8 14.400v-3.600c.2-3.400 1.800-5.600 4.400-6.400z" fill="#2f58a6"/></g>
<g transform="translate(472.8 25.3) scale(1.000)"><path d="M1.200 9.800L6.600 2l7.800 3v6L8 14.600 1.200 12z" fill="#3b63b0" stroke="#1f3f7e" stroke-width=".7" stroke-linejoin="round"/><path d="M1.600 9.800L6.800 2.400l5 2-4.800 7.400z" fill="#d01a0a" stroke="#8a0a00" stroke-width=".5"/><path d="M11.800 4.400l2.600 1v5.600L8 14.400l-1-2.600z" fill="#2f58a6"/></g>
<g transform="translate(492.1 25.3) scale(1.000)"><path d="M8 1.200l6.400 2.600v8L8 15l-6.400-3.200v-8z" fill="#3b63b0" stroke="#1f3f7e" stroke-width=".8" stroke-linejoin="round"/><path d="M1.800 3.800L8 1.400l6.200 2.400L8 6.400z" fill="#6e93d2"/><path d="M4 6.600l4 1.600 4-1.600v5L8 13.400l-4-1.800z" fill="#d01a0a"/><path d="M8 8.200v5.200" stroke="#8a0a00" stroke-width=".6"/></g>
<g transform="translate(511.7 25.3) scale(1.000)"><path d="M2.200 2.400L8.800 1l5.400 1.800-1 8.800L7.600 15l-5-2.800z" fill="#3b63b0" stroke="#1f3f7e" stroke-width=".8" stroke-linejoin="round"/><path d="M4.400 3.800l4.400-1 3.400 1.200-.8 6.600-3.600 2.200-3.200-1.800z" fill="#d01a0a"/><path d="M7.600 4.800v8M7.600 11l3.800-1.200" stroke="#8a0a00" stroke-width=".6" fill="none"/></g>
<rect x="534.2" y="28.7" width="1" height="1" fill="#d2d2d2"/><rect x="536.4" y="28.7" width="1" height="1" fill="#d2d2d2"/><rect x="534.2" y="30.9" width="1" height="1" fill="#d2d2d2"/><rect x="536.4" y="30.9" width="1" height="1" fill="#d2d2d2"/><rect x="534.2" y="33.1" width="1" height="1" fill="#d2d2d2"/><rect x="536.4" y="33.1" width="1" height="1" fill="#d2d2d2"/><rect x="534.2" y="35.3" width="1" height="1" fill="#d2d2d2"/><rect x="536.4" y="35.3" width="1" height="1" fill="#d2d2d2"/><rect x="534.2" y="37.5" width="1" height="1" fill="#d2d2d2"/><rect x="536.4" y="37.5" width="1" height="1" fill="#d2d2d2"/>
<g transform="translate(539.1 25.3) scale(1.000)"><path d="M1 8l4-4.400 3 2 3-3.200 4 2.200v9.800l-7.400.4L1 13z" fill="#3b63b0" stroke="#1f3f7e" stroke-width=".7" stroke-linejoin="round"/><path d="M1.200 10.600l6.600 1.600 7-1.200" fill="none" stroke="#7a9bd6" stroke-width=".7"/><path d="M3.600 3l2.400 1v6.600l-2.400-1z" fill="#5580c8" stroke="#1f3f7e" stroke-width=".5"/><path d="M1.600 13.600l6-5.200" stroke="#d81e0e" stroke-width="1"/><path d="M7.2 8.0v3.3a3.0 1.5 0 0 0 6.0 0v-3.3" fill="#e6cf00" stroke="#8f7a00" stroke-width=".5"/><ellipse cx="10.2" cy="8.0" rx="3.0" ry="1.7" fill="#fcf27a" stroke="#8f7a00" stroke-width=".5"/></g>
<g transform="translate(558.7 25.3) scale(1.000)"><path d="M1 9.600L12 2.400l3 1.400v10.600l-7.400.6L1 13z" fill="#3b63b0" stroke="#1f3f7e" stroke-width=".7" stroke-linejoin="round"/><path d="M4.1 8.8v1.7a1.5 0.8 0 0 0 3.0 0v-1.7" fill="#e6cf00" stroke="#8f7a00" stroke-width=".5"/><ellipse cx="5.6" cy="8.8" rx="1.5" ry="0.8" fill="#fcf27a" stroke="#8f7a00" stroke-width=".5"/><path d="M7.5 8.2v1.7a1.5 0.8 0 0 0 3.0 0v-1.7" fill="#e6cf00" stroke="#8f7a00" stroke-width=".5"/><ellipse cx="9.0" cy="8.2" rx="1.5" ry="0.8" fill="#fcf27a" stroke="#8f7a00" stroke-width=".5"/><path d="M10.9 7.6v1.7a1.5 0.8 0 0 0 3.0 0v-1.7" fill="#e6cf00" stroke="#8f7a00" stroke-width=".5"/><ellipse cx="12.4" cy="7.6" rx="1.5" ry="0.8" fill="#fcf27a" stroke="#8f7a00" stroke-width=".5"/></g>
<g transform="translate(578.1 25.3) scale(1.000)"><path d="M1 8.600L11 2l4 1.800v10.600l-7.400.6L1 13z" fill="#3b63b0" stroke="#1f3f7e" stroke-width=".7" stroke-linejoin="round"/><path d="M6.6 3.8v1.5a1.4 0.7 0 0 0 2.8 0v-1.5" fill="#e6cf00" stroke="#8f7a00" stroke-width=".5"/><ellipse cx="8.0" cy="3.8" rx="1.4" ry="0.8" fill="#fcf27a" stroke="#8f7a00" stroke-width=".5"/><path d="M10.4 5.8v1.5a1.4 0.7 0 0 0 2.8 0v-1.5" fill="#e6cf00" stroke="#8f7a00" stroke-width=".5"/><ellipse cx="11.8" cy="5.8" rx="1.4" ry="0.8" fill="#fcf27a" stroke="#8f7a00" stroke-width=".5"/><path d="M3.6 6.6v1.5a1.4 0.7 0 0 0 2.8 0v-1.5" fill="#e6cf00" stroke="#8f7a00" stroke-width=".5"/><ellipse cx="5.0" cy="6.6" rx="1.4" ry="0.8" fill="#fcf27a" stroke="#8f7a00" stroke-width=".5"/><path d="M10.6 10.0v1.5a1.4 0.7 0 0 0 2.8 0v-1.5" fill="#e6cf00" stroke="#8f7a00" stroke-width=".5"/><ellipse cx="12.0" cy="10.0" rx="1.4" ry="0.8" fill="#fcf27a" stroke="#8f7a00" stroke-width=".5"/><path d="M6.6 11.4v1.5a1.4 0.7 0 0 0 2.8 0v-1.5" fill="#e6cf00" stroke="#8f7a00" stroke-width=".5"/><ellipse cx="8.0" cy="11.4" rx="1.4" ry="0.8" fill="#fcf27a" stroke="#8f7a00" stroke-width=".5"/><path d="M3.0 10.4v1.5a1.4 0.7 0 0 0 2.8 0v-1.5" fill="#e6cf00" stroke="#8f7a00" stroke-width=".5"/><ellipse cx="4.4" cy="10.4" rx="1.4" ry="0.8" fill="#fcf27a" stroke="#8f7a00" stroke-width=".5"/></g>
<g transform="translate(597.7 25.3) scale(1.000)"><path d="M1 8.600L9 3l6 1.800v9.600l-7.400.6L1 13z" fill="#3b63b0" stroke="#1f3f7e" stroke-width=".7" stroke-linejoin="round"/><path d="M3.2 5.6v2.0a1.8 0.9 0 0 0 3.6 0v-2.0" fill="#e6cf00" stroke="#8f7a00" stroke-width=".5"/><ellipse cx="5.0" cy="5.6" rx="1.8" ry="1.0" fill="#fcf27a" stroke="#8f7a00" stroke-width=".5"/><path d="M8.0 3.4v2.9a2.6 1.3 0 0 0 5.2 0v-2.9" fill="#e6cf00" stroke="#8f7a00" stroke-width=".5"/><ellipse cx="10.6" cy="3.4" rx="2.6" ry="1.4" fill="#fcf27a" stroke="#8f7a00" stroke-width=".5"/><path d="M6.4 8.4v2.2a2.0 1.0 0 0 0 4.0 0v-2.2" fill="#e6cf00" stroke="#8f7a00" stroke-width=".5"/><ellipse cx="8.4" cy="8.4" rx="2.0" ry="1.1" fill="#fcf27a" stroke="#8f7a00" stroke-width=".5"/><path d="M10.2 10.4v2.4a2.2 1.1 0 0 0 4.4 0v-2.4" fill="#e6cf00" stroke="#8f7a00" stroke-width=".5"/><ellipse cx="12.4" cy="10.4" rx="2.2" ry="1.2" fill="#fcf27a" stroke="#8f7a00" stroke-width=".5"/></g>
</svg>
<div class="t b" style="left:601.3px;top:4px;font-size:13.4px;line-height:13px;height:13px;letter-spacing:.3px;color:#484848;font-weight:normal;-webkit-text-stroke:.15px #484848;transform:scaleX(1.36);transform-origin:0 0">{}</div>
<div class="t b" style="left:635.6px;top:3.2px;font-size:13.5px;line-height:13px;height:13px;color:#24478f">?</div>
<!--/TB1-->
<!--TB2--><!--/TB2-->
<!-- VIEW -->
<div id="view"></div>
<!--MODEL3D--><svg style="left:0;top:0" width="1170" height="658" viewBox="0 0 1170 658">
<polygon points="360.5,170.6 401.2,194.1 604.7,76.6 564.0,53.1" fill="#a1a5a8" stroke="#1a1a1a" stroke-width="1.2" stroke-linejoin="round"/>
<polygon points="401.2,194.1 604.7,76.6 604.7,123.6 401.2,241.1" fill="#676b6e" stroke="#1a1a1a" stroke-width="1.2" stroke-linejoin="round"/>
<polygon points="401.2,241.1 726.8,429.1 930.3,311.6 604.7,123.6" fill="#a1a5a8" stroke="#1a1a1a" stroke-width="1.2" stroke-linejoin="round"/>
<polygon points="360.5,264.6 767.5,499.6 767.5,405.6 726.8,382.1 726.8,429.1 401.2,241.1 401.2,194.1 360.5,170.6" fill="#969aa1" stroke="#1a1a1a" stroke-width="1.2" stroke-linejoin="round"/>
<polygon points="726.8,382.1 767.5,405.6 971.0,288.1 930.3,264.6" fill="#a1a5a8" stroke="#1a1a1a" stroke-width="1.2" stroke-linejoin="round"/>
<polygon points="767.5,499.6 971.0,382.1 971.0,288.1 767.5,405.6" fill="#676b6e" stroke="#1a1a1a" stroke-width="1.2" stroke-linejoin="round"/>
</svg><!--/MODEL3D-->
<!--NAVCUBE-->
<svg style="left:0;top:0" width="1170" height="658" viewBox="0 0 1170 658">
<path d="M1126.100 48.400l-7.100 8.800h14.700z" stroke="#5a5a5a" stroke-width=".7" fill="#f4f4f4" stroke-linejoin="round" stroke-opacity=".85"/>
<path d="M1119 120.500h14.700l-7.300 8.400z" stroke="#5a5a5a" stroke-width=".7" fill="#f4f4f4" stroke-linejoin="round" stroke-opacity=".85"/>
<path d="M1085.800 88.600l8.900-6.800v13.700z" stroke="#5a5a5a" stroke-width=".7" fill="#f4f4f4" stroke-linejoin="round" stroke-opacity=".85"/>
<path d="M1166.400 88.600l-8.400-6.800v13.700z" stroke="#5a5a5a" stroke-width=".7" fill="#f4f4f4" stroke-linejoin="round" stroke-opacity=".85"/>
<circle cx="1161.100" cy="54" r="4.100" stroke="#5a5a5a" stroke-width=".7" fill="#f4f4f4" stroke-linejoin="round" stroke-opacity=".85"/>
<path d="M1115.400 52.800c-6 1.600-11.600 5-15.600 9.400l-1.800-2.200-2 9.600 9.400-1.800-2.200-2.200c3.600-3.600 8.200-6.400 13-7.800z" stroke="#5a5a5a" stroke-width=".7" fill="#f4f4f4" stroke-linejoin="round" stroke-opacity=".85"/>
<path d="M1136.800 52.800c6 1.600 11.600 5 15.600 9.400l1.800-2.200 2 9.600-9.400-1.800 2.200-2.200c-3.600-3.600-8.200-6.400-13-7.800z" stroke="#5a5a5a" stroke-width=".7" fill="#f4f4f4" stroke-linejoin="round" stroke-opacity=".85"/>
<path d="M1126.100 62.500l17.200 9.400 7.600 7.900v18.700l-19.500 15.700h-9.100l-20.500-15.700V79.800l6.800-7.900z" stroke="#5a5a5a" stroke-width=".7" fill="#f4f4f4" stroke-linejoin="round" stroke-opacity=".85"/>
<path d="M1120.300 88.600l2.900-5h5.800l2.900 5-2.900 5h-5.800z" stroke="#5a5a5a" stroke-width=".7" fill="#f4f4f4" stroke-linejoin="round" stroke-opacity=".85"/>
<path d="M1123.200 83.600l-14.200-8.300M1120.300 88.600l-16.200-8.600M1129 83.600l14.200-8.300M1131.900 88.600l16.600-8.600" stroke="#5a5a5a" stroke-width=".7" fill="none" stroke-linejoin="round" stroke-opacity=".85"/>
<path d="M1122.600 93.600v17.600l3 2.200h1.600l2.700-2.200V93.600M1122.600 111.200h7.300" stroke="#5a5a5a" stroke-width=".7" fill="none" stroke-linejoin="round" stroke-opacity=".85"/>
<path d="M1104.100 79v18.600l17 13.200M1148.500 79v18.600l-17.400 13.200" stroke="#5a5a5a" stroke-width=".7" fill="none" stroke-linejoin="round" stroke-opacity=".85"/>
<path d="M1096.500 80.700v25" stroke="#5555ee" stroke-width="1" fill="none"/>
<path d="M1096.500 105.700l22-12.500" stroke="#66dd55" stroke-width=".8" fill="none" stroke-opacity=".8"/>
<path d="M1096.500 105.700l22 13" stroke="#cc5555" stroke-width="1" fill="none"/>
<text transform="matrix(.866 .5 -.866 .5 1126.600 75.400)" font-family="Liberation Sans, sans-serif" font-size="6.600" fill="#7c7c7c" text-anchor="middle">TOP</text>
<text transform="matrix(.866 .5 0 1 1112.600 98.400)" font-family="Liberation Sans, sans-serif" font-size="6.600" fill="#7c7c7c" text-anchor="middle">FRONT</text>
<text transform="matrix(.866 -.5 0 1 1140 98.600)" font-family="Liberation Sans, sans-serif" font-size="6.600" fill="#7c7c7c" text-anchor="middle">RIGHT</text>
<path d="M1153.500 111.200l6 2.400v7.200l-6 3-6-3v-7.200z" stroke="#5a5a5a" stroke-width=".7" fill="#f4f4f4" stroke-linejoin="round" stroke-opacity=".85"/>
<path d="M1147.500 113.600l6 2.600 6-2.600M1153.500 116.200v7.600" stroke="#5a5a5a" stroke-width=".7" fill="none" stroke-linejoin="round" stroke-opacity=".85"/>
<path d="M1141.400 592.100v-13" stroke="#2222dd" stroke-width="1.300"/><path d="M1141.400 573.800l-1.900 5.800h3.800z" fill="#2222dd"/>
<path d="M1141.400 592.100l7.400-4.300" stroke="#33cc11" stroke-width="1.300"/><path d="M1152.800 585.700l-5.600 1 1.800 3z" fill="#33cc11"/>
<path d="M1141.400 592.100l11.400 6.700" stroke="#bb2211" stroke-width="1.300"/><path d="M1157.600 601.600l-5.800-1.200 1.900-3.200z" fill="#bb2211"/>
<text x="1143.600" y="572.400" font-family="Liberation Sans, sans-serif" font-size="5.900" font-weight="bold" fill="#111" text-anchor="middle">Z</text>
<text x="1155.700" y="584.900" font-family="Liberation Sans, sans-serif" font-size="5.900" font-weight="bold" fill="#111" text-anchor="middle">Y</text>
<text x="1160.300" y="601.500" font-family="Liberation Sans, sans-serif" font-size="5.900" font-weight="bold" fill="#111" text-anchor="middle">X</text>
</svg>
<!--/NAVCUBE-->
<!--AXIS-->
<!-- LEFT PANEL -->
<!--LEFT-->
<div class="abs" style="left:0.5px;top:45.3px;width:29.8px;height:15.5px;background:#fbfbfb;border-radius:3px 3px 0 0;border:1px solid #e4e4e4;border-bottom:none"></div>
<div class="abs" style="left:30.3px;top:45.3px;width:26.7px;height:15.5px;background:#dedede;border-radius:3px 3px 0 0;border:1px solid #d2d2d2;border-bottom:none"></div>
<div class="abs" style="left:178.8px;top:62.0px;width:9.6px;height:9.6px;background:#f4f4f4;border:1px solid #d0d0d0;border-radius:2px"></div>
<div class="abs" style="left:192.3px;top:62.0px;width:9.6px;height:9.6px;background:#f4f4f4;border:1px solid #d0d0d0;border-radius:2px"></div>
<div class="abs" style="left:205.5px;top:62.0px;width:9.6px;height:9.6px;background:#f4f4f4;border:1px solid #d0d0d0;border-radius:2px"></div>
<div class="abs" style="left:14.7px;top:82.9px;width:57.1px;height:10.9px;background:#6bad00;"></div>
<div class="abs" style="left:0.0px;top:138.0px;width:102.3px;height:10.6px;background:#a6c9fb;"></div>
<div class="abs" style="left:0.0px;top:338.5px;width:216.3px;height:285.0px;background:#efefef;border:1px solid #d8d8d8;border-left:none;border-radius:0 0 4px 4px"></div>
<div class="abs" style="left:0.0px;top:338.3px;width:214.3px;height:13.8px;background:#dcdcdc;border-bottom:1px solid #d0d0d0;border-top:1px solid #d4d4d4"></div>
<div class="abs" style="left:0.0px;top:352.1px;width:214.3px;height:12.8px;background:#f3f3f3;border-bottom:1px solid #dcdcdc"></div>
<div class="abs" style="left:60.6px;top:352.1px;width:1.0px;height:12.8px;background:#d8d8d8;"></div>
<div class="abs" style="left:0.0px;top:352.1px;width:7.8px;height:12.8px;background:#ebebeb;"></div>
<div class="abs" style="left:0.0px;top:364.9px;width:214.3px;height:12.8px;background:#eeeeee;border-bottom:1px solid #dcdcdc"></div>
<div class="abs" style="left:60.6px;top:364.9px;width:1.0px;height:12.8px;background:#d8d8d8;"></div>
<div class="abs" style="left:0.0px;top:364.9px;width:7.8px;height:12.8px;background:#ebebeb;"></div>
<div class="abs" style="left:0.0px;top:377.7px;width:214.3px;height:12.8px;background:#f3f3f3;border-bottom:1px solid #dcdcdc"></div>
<div class="abs" style="left:60.6px;top:377.7px;width:1.0px;height:12.8px;background:#d8d8d8;"></div>
<div class="abs" style="left:0.0px;top:377.7px;width:7.8px;height:12.8px;background:#ebebeb;"></div>
<div class="abs" style="left:0.0px;top:390.5px;width:214.3px;height:12.8px;background:#eeeeee;border-bottom:1px solid #dcdcdc"></div>
<div class="abs" style="left:60.6px;top:390.5px;width:1.0px;height:12.8px;background:#d8d8d8;"></div>
<div class="abs" style="left:0.0px;top:390.5px;width:7.8px;height:12.8px;background:#ebebeb;"></div>
<div class="abs" style="left:62.8px;top:392.7px;width:8.2px;height:8.2px;background:#fafafa;border:1px solid #d6d6d6;border-radius:2px"></div>
<div class="abs" style="left:0.0px;top:403.3px;width:214.3px;height:12.8px;background:#f3f3f3;border-bottom:1px solid #dcdcdc"></div>
<div class="abs" style="left:60.6px;top:403.3px;width:1.0px;height:12.8px;background:#d8d8d8;"></div>
<div class="abs" style="left:0.0px;top:403.3px;width:7.8px;height:12.8px;background:#ebebeb;"></div>
<div class="abs" style="left:0.0px;top:416.1px;width:214.3px;height:12.8px;background:#dcdcdc;border-bottom:1px solid #d0d0d0"></div>
<div class="abs" style="left:0.0px;top:428.9px;width:214.3px;height:12.8px;background:#f3f3f3;border-bottom:1px solid #dcdcdc"></div>
<div class="abs" style="left:60.6px;top:428.9px;width:1.0px;height:12.8px;background:#d8d8d8;"></div>
<div class="abs" style="left:0.0px;top:428.9px;width:7.8px;height:12.8px;background:#ebebeb;"></div>
<div class="abs" style="left:0.0px;top:441.7px;width:214.3px;height:12.8px;background:#eeeeee;border-bottom:1px solid #dcdcdc"></div>
<div class="abs" style="left:60.6px;top:441.7px;width:1.0px;height:12.8px;background:#d8d8d8;"></div>
<div class="abs" style="left:0.0px;top:441.7px;width:7.8px;height:12.8px;background:#ebebeb;"></div>
<div class="abs" style="left:0.0px;top:454.5px;width:214.3px;height:12.8px;background:#dcdcdc;border-bottom:1px solid #d0d0d0"></div>
<div class="abs" style="left:0.0px;top:467.3px;width:214.3px;height:12.8px;background:#eeeeee;border-bottom:1px solid #dcdcdc"></div>
<div class="abs" style="left:60.6px;top:467.3px;width:1.0px;height:12.8px;background:#d8d8d8;"></div>
<div class="abs" style="left:0.0px;top:467.3px;width:7.8px;height:12.8px;background:#ebebeb;"></div>
<div class="abs" style="left:62.8px;top:469.5px;width:8.2px;height:8.2px;background:#fafafa;border:1px solid #d6d6d6;border-radius:2px"></div>
<div class="abs" style="left:0.0px;top:480.1px;width:214.3px;height:12.8px;background:#dcdcdc;border-bottom:1px solid #d0d0d0"></div>
<div class="abs" style="left:0.0px;top:492.9px;width:214.3px;height:12.8px;background:#eeeeee;border-bottom:1px solid #dcdcdc"></div>
<div class="abs" style="left:60.6px;top:492.9px;width:1.0px;height:12.8px;background:#d8d8d8;"></div>
<div class="abs" style="left:0.0px;top:492.9px;width:7.8px;height:12.8px;background:#ebebeb;"></div>
<div class="abs" style="left:0.0px;top:505.7px;width:214.3px;height:12.8px;background:#f3f3f3;border-bottom:1px solid #dcdcdc"></div>
<div class="abs" style="left:60.6px;top:505.7px;width:1.0px;height:12.8px;background:#d8d8d8;"></div>
<div class="abs" style="left:0.0px;top:505.7px;width:7.8px;height:12.8px;background:#ebebeb;"></div>
<div class="abs" style="left:0.0px;top:518.5px;width:214.3px;height:12.8px;background:#eeeeee;border-bottom:1px solid #dcdcdc"></div>
<div class="abs" style="left:60.6px;top:518.5px;width:1.0px;height:12.8px;background:#d8d8d8;"></div>
<div class="abs" style="left:0.0px;top:518.5px;width:7.8px;height:12.8px;background:#ebebeb;"></div>
<div class="abs" style="left:214.3px;top:338.5px;width:1.4px;height:192.6px;background:#d2d2d2;"></div>
<div class="abs" style="left:83.0px;top:623.3px;width:23.7px;height:15.0px;background:#dcdcdc;border-radius:0 0 3px 3px;border:1px solid #cecece;border-top:none"></div>
<div class="abs" style="left:106.7px;top:623.3px;width:23.5px;height:15.0px;background:#ffffff;border-radius:0 0 3px 3px;border:1px solid #e0e0e0;border-top:none"></div>
<div class="abs" style="left:218.8px;top:621.5px;width:39.4px;height:17.0px;background:#dcdcdc;border-radius:0 0 3px 3px;border:1px solid #d0d0d0;border-top:none"></div>
<div class="abs" style="left:219.0px;top:621.0px;width:951.0px;height:1.0px;background:#cfcfcf;"></div>
<div class="abs" style="left:259.0px;top:620.5px;width:91.2px;height:17.8px;background:#f7f7f7;border-radius:0 0 3px 3px;border:1px solid #e2e2e2;border-top:none"></div>
<div class="abs" style="left:973.8px;top:645.0px;width:8.6px;height:8.2px;background:linear-gradient(#5d82c4,#3a5fa8);border:0.5px solid #35579a"></div>
<!--/LEFT-->
<!--MISC-->
<svg style="left:0;top:0" width="1170" height="658" viewBox="0 0 1170 658">
<path d="M1.6 75.9h4.4l-2.2 2.6z" fill="#4d4d4d"/>
<g transform="translate(10.2 72.2)"><path d="M.4.400h5l2 2v7.200h-7z" fill="#f4f4f2" stroke="#9a9a9a" stroke-width=".6"/><circle cx="3.300" cy="5.600" r="2" fill="#2f58a6"/><circle cx="4.700" cy="3.800" r="1.300" fill="#d01a0a"/><circle cx="3" cy="5.200" r=".7" fill="#7a9bd6"/></g>
<path d="M8.7 87.0h4.4l-2.2 2.6z" fill="#4d4d4d"/>
<g transform="translate(21.4 88.5)"><path d="M-3.7 0C-2.4-2.3 2.4-2.3 3.7 0 2.4 2.3-2.4 2.300-3.700 0z" fill="#fff" stroke="#111" stroke-width=".9"/><circle r="1.25" fill="#111"/></g>
<g transform="translate(29.64 83.14) scale(0.620)"><path d="M2.800 5.500L7.200 1.700L11 3.800V6.400L13.700 8.200V11.300L8.600 14.400L2.800 10.300z" fill="#3b63b0" stroke="#1f3f7e" stroke-width=".9" stroke-linejoin="round"/>
<path d="M2.800 5.500L7.200 1.700L11 3.800L6.600 7.500z" fill="#8fade3"/><path d="M6.600 7.500L11 3.800V6.400L6.600 10.100z" fill="#2c4f9c"/><path d="M6.600 10.100L11 6.400L13.700 8.200L8.600 11.900z" fill="#7d9fdc"/><path d="M8.600 11.900L13.700 8.200V11.300L8.600 14.400z" fill="#27478f"/><path d="M2.800 5.500L6.600 7.500V10.100L8.600 11.900V14.400L2.800 10.300z" fill="#4a74c0"/></g>
<path d="M16.9 97.3v4.2l2.6 -2.1z" fill="#4d4d4d"/>
<g transform="translate(28.6 99.5)" fill="none" stroke="#8c8c8c" stroke-width=".9"><path d="M-3.500.3C-2.300-2 2.300-2 3.500.3 2.300 2.400-2.300 2.400-3.500.3z"/><circle r="1" cy=".3"/><path d="M-2.800-2.700l5.600 5.800"/></g>
<g stroke="#555" stroke-width=".9" fill="none"><path d="M42.200 95v5.200M42.200 100.200l4.600-.2M42.200 100.200l-3.800 2.800"/></g>
<path d="M16.0 109.1h4.4l-2.2 2.6z" fill="#4d4d4d"/>
<g transform="translate(28.6 110.5)" fill="none" stroke="#8c8c8c" stroke-width=".9"><path d="M-3.500.3C-2.300-2 2.300-2 3.500.3 2.300 2.400-2.300 2.400-3.500.3z"/><circle r="1" cy=".3"/><path d="M-2.800-2.700l5.600 5.800"/></g>
<g transform="translate(37.200 106)"><path d="M.8 6.200L4.600 5l3.800 1.200-3.800 1.600z" fill="#e8e8e8" stroke="#3a3a3a" stroke-width=".9" stroke-linejoin="round"/><path d="M1 1.800C2.200.6 3.400.2 4.800.200l3.400 1v2.600c-1.200.8-2.200 1.200-3.400 1.200L1 4z" fill="#8e908c" stroke="#4a4a4a" stroke-width=".5"/><path d="M1.200 1.800C2.200.800 3.400.400 4.800.400l3.200 1c-1.200.2-2.400.800-3.400 1.600z" fill="#c4c6c2"/></g>
<g transform="translate(35.9 121.5)" fill="none" stroke="#8c8c8c" stroke-width=".9"><path d="M-3.500.3C-2.300-2 2.300-2 3.500.3 2.300 2.400-2.300 2.400-3.500.3z"/><circle r="1" cy=".3"/><path d="M-2.800-2.700l5.600 5.800"/></g>
<g transform="translate(49.3 121.2)" fill="none" stroke="#5f5f5f" stroke-width=".9"><rect x="-4.300" y="-1.600" width="5.600" height="5.800" rx=".8"/><circle cx="1.400" cy="-1.400" r="3"/></g>
<path d="M16.0 130.7h4.4l-2.2 2.6z" fill="#4d4d4d"/>
<g transform="translate(28.7 132.4)"><path d="M-3.7 0C-2.4-2.3 2.4-2.3 3.7 0 2.4 2.3-2.4 2.300-3.700 0z" fill="#fff" stroke="#111" stroke-width=".9"/><circle r="1.25" fill="#111"/></g>
<g transform="translate(37.400 128)"><path d="M.6 6.200l4-1.200 4 1.200-4 1.800z" fill="none" stroke="#b01000" stroke-width="1.100" stroke-linejoin="round"/><path d="M.8 1.800C2 .600 3.400.200 4.800.200l3.600 1v2.800c-1.200.8-2.400 1.200-3.600 1.200L.8 4.200z" fill="#e6cf00" stroke="#8f7a00" stroke-width=".5"/><path d="M1 1.800C2 .800 3.400.400 4.800.400L8 1.400c-1.200.2-2.400.8-3.400 1.600z" fill="#fcf27a"/><circle cx="6.300" cy="6" r="2.700" fill="#5fb518" stroke="#fff" stroke-width=".5"/><path d="M6.300 4.200v2.200M4.800 6l1.500 1.700L7.800 6z" fill="#fff" stroke="#fff" stroke-width=".9"/></g>
<g transform="translate(35.9 143.3)" fill="none" stroke="#8c8c8c" stroke-width=".9"><path d="M-3.500.3C-2.300-2 2.300-2 3.500.3 2.300 2.400-2.300 2.400-3.500.3z"/><circle r="1" cy=".3"/><path d="M-2.800-2.700l5.600 5.800"/></g>
<g transform="translate(49.3 143.0)" fill="none" stroke="#5f5f5f" stroke-width=".9"><rect x="-4.300" y="-1.600" width="5.600" height="5.800" rx=".8"/><circle cx="1.400" cy="-1.400" r="3"/></g>
<g fill="none" stroke="#6a6a6a" stroke-width="1"><rect x="180.800" y="63.500" width="5.400" height="5.400" rx=".8"/><path d="M180.800 65.400h5.400"/></g>
<g fill="none" stroke="#6a6a6a" stroke-width="1"><rect x="194.200" y="65.200" width="3.800" height="3.800" rx=".6"/><path d="M195.800 65v-1.300h3.800v3.800h-1.400"/></g>
<path d="M207.800 64.200l4.600 4.600M212.400 64.200l-4.600 4.600" stroke="#6a6a6a" stroke-width="1.100"/>
<path d="M2.8 406.8v4.6l2.6 -2.3z" fill="#666"/>
<path d="M2.8 432.4v4.6l2.6 -2.3z" fill="#666"/>
<path d="M2.8 496.4v4.6l2.6 -2.3z" fill="#666"/>
<path d="M246.1 627.0l6.2 6.2M252.3 627.0l-6.2 6.2" stroke="#787878" stroke-width="1.250"/>
<path d="M338.6 627.0l6.2 6.2M344.8 627.0l-6.2 6.2" stroke="#787878" stroke-width="1.250"/>
<g transform="translate(262.600 624.500) scale(1.1)"><path d="M.4.400h4.600l1.800 1.800v6.600H.4z" fill="#f4f4f2" stroke="#9a9a9a" stroke-width=".6"/><circle cx="3" cy="5.200" r="1.800" fill="#2f58a6"/><circle cx="4.300" cy="3.500" r="1.200" fill="#d01a0a"/></g>
<path d="M993.7 648.6h4.200l-2.100 2.400z" fill="#6a6a6a"/>
<path d="M1049.1 648.6h4.200l-2.100 2.400z" fill="#6a6a6a"/>
<path d="M1163.5 648.6h4.200l-2.100 2.400z" fill="#6a6a6a"/>
<g fill="none" stroke="#555" stroke-width=".8"><rect x="1011.800" y="645.200" width="4.400" height="7.400" rx="2.100"/><path d="M1014 646.200v1.800"/></g>
</svg>
<!--/MISC-->
<!-- BOTTOM -->
<!--BOTTOM-->
<div class="t b" style="left:3.0px;top:48px;font-size:8.20px;letter-spacing:0.062px">Model</div>
<div class="t" style="left:34.0px;top:48px;font-size:8.20px;letter-spacing:-0.192px">Tasks</div>
<div class="t" style="left:80.0px;top:62px;font-size:8.20px;letter-spacing:0.033px">Model</div>
<div class="t b" style="left:22.7px;top:72px;font-size:7.00px;letter-spacing:-0.013px">Unnamed</div>
<div class="t b" style="left:43.6px;top:83px;font-size:7.00px;letter-spacing:-0.225px">Body</div>
<div class="t" style="left:50.8px;top:94px;font-size:7.00px;letter-spacing:0.021px;color:#7e7e7e">Origin</div>
<div class="t" style="left:50.8px;top:105px;font-size:7.00px;letter-spacing:-0.419px;color:#7e7e7e">Pad</div>
<div class="t" style="left:57.9px;top:116px;font-size:7.00px;letter-spacing:0.017px;color:#7e7e7e">Sketch</div>
<div class="t b" style="left:50.8px;top:127px;font-size:7.00px;letter-spacing:-0.270px">Pad001</div>
<div class="t b" style="left:57.9px;top:138px;font-size:7.00px;letter-spacing:-0.148px">Sketch001</div>
<div class="t b" style="left:2.4px;top:340px;font-size:8.20px;letter-spacing:0.109px">Attachment</div>
<div class="t" style="left:10.0px;top:353px;font-size:8.20px;letter-spacing:-0.099px">Attacher En...</div>
<div class="t" style="left:63.2px;top:353px;font-size:8.20px;letter-spacing:-0.066px">Engine 3D</div>
<div class="t" style="left:10.0px;top:366px;font-size:8.20px;letter-spacing:-0.001px">Attachment...</div>
<div class="t" style="left:63.2px;top:366px;font-size:8.20px;letter-spacing:-0.038px">Pad [Face6]</div>
<div class="t" style="left:10.0px;top:379px;font-size:8.20px;letter-spacing:-0.093px">Map Mode</div>
<div class="t" style="left:63.2px;top:379px;font-size:8.20px;letter-spacing:-0.187px">FlatFace</div>
<div class="t" style="left:10.0px;top:391px;font-size:8.20px;letter-spacing:-0.211px">Map Revers...</div>
<div class="t" style="left:74.4px;top:391px;font-size:8.20px;letter-spacing:-0.342px">No</div>
<div class="t" style="left:10.0px;top:404px;font-size:8.20px;letter-spacing:-0.001px">Attachment...</div>
<div class="t" style="left:63.2px;top:404px;font-size:8.20px;letter-spacing:0.108px">[(0.00 0.00 1.00); 0.00°; (0.00 mm &nbsp;0....</div>
<div class="t b" style="left:2.4px;top:417px;font-size:8.20px;letter-spacing:-0.176px">Base</div>
<div class="t" style="left:10.0px;top:430px;font-size:8.20px;letter-spacing:-0.082px">Placement</div>
<div class="t" style="left:63.2px;top:430px;font-size:8.20px;letter-spacing:0.108px;color:#7e7e7e">[(0.00 0.00 1.00); 0.00°; (0.00 mm &nbsp;0....</div>
<div class="t" style="left:10.0px;top:443px;font-size:8.20px;letter-spacing:-0.173px">Label</div>
<div class="t" style="left:63.2px;top:443px;font-size:8.20px;letter-spacing:-0.017px">Sketch001</div>
<div class="t b" style="left:2.4px;top:455px;font-size:8.20px;letter-spacing:-0.018px">Internal Geo...</div>
<div class="t" style="left:10.0px;top:468px;font-size:8.20px;letter-spacing:-0.131px">Make Intern...</div>
<div class="t" style="left:74.4px;top:468px;font-size:8.20px;letter-spacing:-0.342px">No</div>
<div class="t b" style="left:2.4px;top:481px;font-size:8.20px;letter-spacing:0.035px">Sketch</div>
<div class="t" style="left:10.0px;top:494px;font-size:8.20px;letter-spacing:0.021px">Constraints</div>
<div class="t" style="left:63.2px;top:494px;font-size:8.20px;letter-spacing:0.071px">[10.00 mm;10.00 mm]</div>
<div class="t" style="left:10.0px;top:507px;font-size:8.20px;letter-spacing:-0.131px">External Ge...</div>
<div class="t" style="left:63.2px;top:507px;font-size:8.20px;letter-spacing:-0.038px;color:#7e7e7e">Pad [Face6]</div>
<div class="t" style="left:10.0px;top:519px;font-size:8.20px;letter-spacing:0.040px">Arc Fit Tole...</div>
<div class="t" style="left:63.2px;top:519px;font-size:8.20px;letter-spacing:0.277px">0.0000010000000000</div>
<div class="t" style="left:86.2px;top:627px;font-size:8.20px;letter-spacing:-0.157px">View</div>
<div class="t b" style="left:110.0px;top:627px;font-size:8.20px;letter-spacing:-0.143px">Data</div>
<div class="t" style="left:222.9px;top:625px;font-size:8.20px;letter-spacing:-0.043px">Start</div>
<div class="t b" style="left:277.6px;top:625px;font-size:8.20px;letter-spacing:-0.083px">Unnamed : 1*</div>
<div class="t" style="left:1.7px;top:644px;font-size:8.20px;letter-spacing:-0.026px">Preselected: Unnamed.Body.Pad001.Face3 (41.48 mm, 43.60 mm, 10.00 mm)</div>
<div class="t" style="left:985.9px;top:644px;font-size:8.20px;letter-spacing:-0.261px">3</div>
<div class="t" style="left:1020.5px;top:644px;font-size:8.20px;letter-spacing:-0.538px">CAD</div>
<div class="t" style="left:1064.6px;top:644px;font-size:8.20px;letter-spacing:0.043px">165.08 mm x 100.00 mm</div>
<div class="t" style="left:186.0px;top:6px;font-size:8.20px;letter-spacing:-0.077px">Part Design</div>
<!--/BOTTOM-->
</div></body></html>
